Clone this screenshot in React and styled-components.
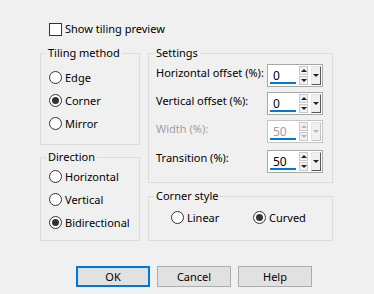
import React from 'react';
import styled, { createGlobalStyle } from 'styled-components';

const Global = createGlobalStyle`
  html, body {
    margin: 0;
    padding: 0;
    background: #f0f0f0;
  }
  body {
    font-family: "Noto Sans", "Open Sans", Arial, sans-serif;
    font-size: 11px;
    color: #000;
  }
`;

const Dialog = styled.div`
  width: 374px;
  height: 294px;
  box-sizing: border-box;
  padding: 21px 0 0 40px;
  background: #f0f0f0;
`;

const CheckRow = styled.label`
  display: flex;
  align-items: center;
  gap: 3px;
  height: 16px;
  margin-left: 9px;
  line-height: 16px;
`;

const CheckBox = styled.span`
  width: 13px;
  height: 13px;
  box-sizing: border-box;
  border: 1px solid #333;
  background: #fff;
`;

const Columns = styled.div`
  display: flex;
  gap: 8px;
  margin-top: 8px;
`;

const Column = styled.div`
  display: flex;
  flex-direction: column;
  gap: ${p => p.$gap}px;
  width: ${p => p.$width}px;
`;

const Group = styled.fieldset`
  margin: 0;
  min-width: 0;
  box-sizing: border-box;
  height: ${p => p.$height}px;
  border: 1px solid #dcdcdc;
  padding: ${p => p.$top}px 0 0 0;
`;

const Legend = styled.legend`
  margin-left: 5px;
  padding: 0 2px;
  line-height: 16px;
  white-space: nowrap;
`;

const RadioList = styled.div`
  display: flex;
  flex-direction: ${p => (p.$row ? 'row' : 'column')};
  padding-left: ${p => p.$indent}px;
`;

const RadioItem = styled.label`
  display: flex;
  align-items: center;
  gap: 3px;
  height: 23px;
  line-height: 16px;
  width: ${p => (p.$width ? `${p.$width}px` : 'auto')};
`;

const Circle = styled.span`
  position: relative;
  width: 13px;
  height: 13px;
  box-sizing: border-box;
  border: 1px solid #333;
  border-radius: 50%;
  background: #fff;
  flex: none;

  &::after {
    content: '';
    display: ${p => (p.$on ? 'block' : 'none')};
    position: absolute;
    left: 2px;
    top: 2px;
    width: 7px;
    height: 7px;
    border-radius: 50%;
    background: #333;
  }
`;

const Fields = styled.div`
  display: grid;
  grid-template-columns: 1fr 56px;
  row-gap: 5px;
  align-items: start;
  padding: 0 9px 0 7px;
`;

const FieldLabel = styled.span`
  color: ${p => (p.$disabled ? '#a0a0a0' : '#000')};
  line-height: 16px;
  white-space: nowrap;
  margin-top: ${p => p.$shift ?? 1}px;
`;

const Spin = styled.div`
  display: flex;
  align-items: stretch;
  height: 23px;
  box-sizing: border-box;
  padding: 1px;
  border: 1px solid ${p => (p.$disabled ? '#c4c4c4' : '#a8a8a8')};
  background: #fff;
  margin-top: ${p => p.$shift || 0}px;
`;

const SpinText = styled.div`
  position: relative;
  width: 27px;
  margin-left: 1px;
  padding-left: 3px;
  box-sizing: border-box;
  font-size: 12px;
  line-height: 19px;
  color: ${p => (p.$disabled ? '#a0a0a0' : '#000')};

  &::after {
    content: '';
    position: absolute;
    left: 0;
    right: 0;
    bottom: 1px;
    height: 2px;
    background: #0078d7;
  }
`;

const Arrows = styled.div`
  display: flex;
  flex-direction: column;
  width: 9px;
  margin-left: 3px;
  gap: 1px;
`;

const ArrowBtn = styled.span`
  flex: 1;
  display: flex;
  align-items: center;
  justify-content: center;
  background: #f2f2f2;
  border: 1px solid #c8c8c8;

  &::before {
    content: '';
    border-left: 3px solid transparent;
    border-right: 3px solid transparent;
    ${p =>
      p.$up
        ? `border-bottom: 3px solid ${p.$disabled ? '#b8b8b8' : '#222'};`
        : `border-top: 3px solid ${p.$disabled ? '#b8b8b8' : '#222'};`}
  }
`;

const DropBtn = styled.span`
  display: flex;
  align-items: center;
  justify-content: center;
  width: 10px;
  margin-left: 3px;
  box-sizing: border-box;
  background: #f0f0f0;
  border: 1px solid #e6e6e6;
  border-right-color: ${p => (p.$disabled ? '#c0c0c0' : '#555')};
  border-bottom-color: ${p => (p.$disabled ? '#c0c0c0' : '#555')};

  &::before {
    content: '';
    border-left: 3px solid transparent;
    border-right: 3px solid transparent;
    border-top: 3px solid ${p => (p.$disabled ? '#b8b8b8' : '#222')};
  }
`;

const Buttons = styled.div`
  display: flex;
  gap: 7px;
  margin: 25px 0 0 36px;
`;

const Button = styled.button`
  width: 74px;
  height: 21px;
  box-sizing: border-box;
  padding: 0;
  font: inherit;
  color: #000;
  background: #e1e1e1;
  border: ${p => (p.$primary ? '2px solid #0078d7' : '1px solid #adadad')};
`;

const SpinBox = ({ value, disabled, shift }) => (
  <Spin $disabled={disabled} $shift={shift}>
    <SpinText $disabled={disabled}>{value}</SpinText>
    <Arrows>
      <ArrowBtn $up $disabled={disabled} />
      <ArrowBtn $disabled={disabled} />
    </Arrows>
    <DropBtn $disabled={disabled} />
  </Spin>
);

const Radio = ({ label, on, width }) => (
  <RadioItem $width={width}>
    <Circle $on={on} />
    {label}
  </RadioItem>
);

const App = () => {
  return (
    <Dialog>
      <Global />
      <CheckRow>
        <CheckBox />
        Show tiling preview
      </CheckRow>

      <Columns>
        <Column $width={100} $gap={4}>
          <Group $height={100} $top={5}>
            <Legend>Tiling method</Legend>
            <RadioList $indent={8}>
              <Radio label="Edge" />
              <Radio label="Corner" on />
              <Radio label="Mirror" />
            </RadioList>
          </Group>
          <Group $height={92} $top={0}>
            <Legend>Direction</Legend>
            <RadioList $indent={8}>
              <Radio label="Horizontal" />
              <Radio label="Vertical" />
              <Radio label="Bidirectional" on />
            </RadioList>
          </Group>
        </Column>

        <Column $width={185} $gap={5}>
          <Group $height={138} $top={3}>
            <Legend>Settings</Legend>
            <Fields>
              <FieldLabel>Horizontal offset (%):</FieldLabel>
              <SpinBox value="0" />
              <FieldLabel>Vertical offset (%):</FieldLabel>
              <SpinBox value="0" />
              <FieldLabel $disabled>Width (%):</FieldLabel>
              <SpinBox value="50" disabled />
              <FieldLabel $shift={2}>Transition (%):</FieldLabel>
              <SpinBox value="50" shift={2} />
            </Fields>
          </Group>
          <Group $height={53} $top={2}>
            <Legend>Corner style</Legend>
            <RadioList $row $indent={22}>
              <Radio label="Linear" width={82} />
              <Radio label="Curved" on />
            </RadioList>
          </Group>
        </Column>
      </Columns>

      <Buttons>
        <Button $primary>OK</Button>
        <Button>Cancel</Button>
        <Button>Help</Button>
      </Buttons>
    </Dialog>
  );
};

export default App;
